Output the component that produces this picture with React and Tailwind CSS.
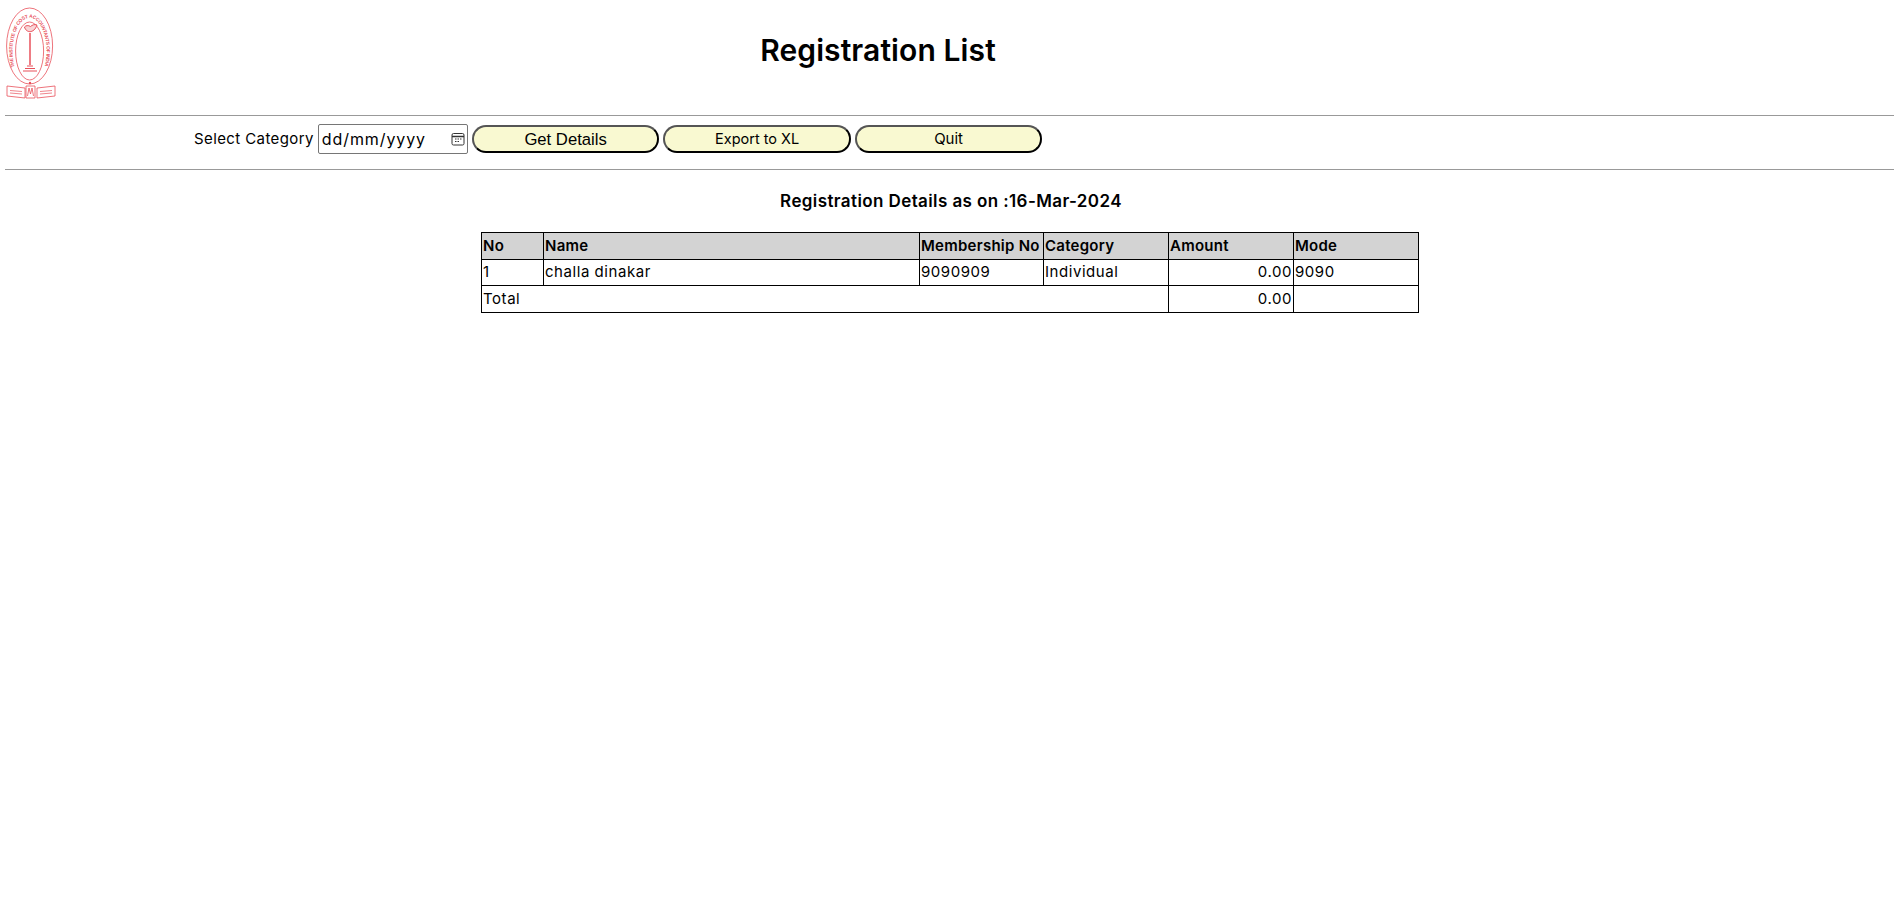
import React from 'react';

const Logo = () => (
  <svg width="52" height="96" viewBox="0 0 52 96" className="shrink-0" fill="none" stroke="#e8505b">
    <defs>
      <path id="logoArc" d="M9.600 62 A17 33.500 0 1 1 39.600 62" />
    </defs>
    <ellipse cx="24.600" cy="41" rx="23" ry="38" strokeWidth="0.8" />
    <ellipse cx="24.600" cy="46" rx="14" ry="29" strokeWidth="0.8" />
    <text fontSize="4.800" fill="#e8505b" stroke="none" fontFamily="'Liberation Sans', sans-serif" fontWeight="700">
      <textPath href="#logoArc" textLength="112" lengthAdjust="spacing">THE INSTITUTE OF COST ACCOUNTANTS OF INDIA</textPath>
    </text>
    <path d="M19.500 22 C21 28 29 29 32 20 C29 19 27.500 20 25.500 21.500 C23.500 20 20.500 20.500 19.500 22 Z" strokeWidth="1" fill="#f9d5d7" />
    <path d="M25 28 V60" strokeWidth="1.500" />
    <path d="M22 61 H28 M20 63.500 H30 M18 66 H32" strokeWidth="1.200" />
    <circle cx="25" cy="78" r="1.200" fill="#e8505b" stroke="none" />
    <path d="M2 81 L20 83 V93 L2 91 Z M50 81 L32 83 V93 L50 91 Z" strokeWidth="0.8" fill="#fff" />
    <path d="M21 81 H30 V93 H21 Z M22.500 91 L24 83 L25.500 89 L27 83 L28.500 91" strokeWidth="0.8" fill="#fff" />
    <path d="M5 85.500 L17 86.500 M5 88 L17 89 M35 86.500 L47 85.500 M35 89 L47 88" strokeWidth="0.7" />
  </svg>
);

const CalendarIcon = () => (
  <svg width="14" height="14" viewBox="0 0 14 14" fill="none" className="shrink-0">
    <rect x="1" y="1.500" width="12" height="11.500" rx="1.500" stroke="#333" strokeWidth="1" />
    <path d="M1 4.500 H13" stroke="#333" strokeWidth="1.500" />
    <path d="M4 7 H5.500 M6.500 7 H8 M9 7 H10.500 M4 9.500 H5.500 M6.500 9.500 H8" stroke="#333" strokeWidth="1" />
  </svg>
);

const PillButton = ({ children, className = 'text-[15px]' }) => (
  <button className={`w-[187.5px] h-[28px] rounded-[14px] bg-[#f9f9d1] border-2 border-t-[#555] border-l-[#555] border-r-black border-b-black text-black ${className}`}>
    {children}
  </button>
);

const th = 'border border-black bg-[#d3d3d3] text-left font-semibold tracking-[0.25px] h-[26.67px] px-px py-0';
const td = 'border border-black text-left font-normal tracking-[0.55px] h-[26.67px] px-px py-0';

export default function App() {
  return (
    <div className="min-h-[920px] bg-white text-black pl-[5px] pr-[10px] font-['Inter','Open_Sans',sans-serif]">
      <div className="flex items-start h-[115px] pt-[5px]">
        <Logo />
        <h1 className="flex-1 text-center text-[30px] font-semibold tracking-[0.1px] pt-[25px] pr-[195px] leading-[40px]">Registration List</h1>
      </div>
      <hr className="border-t border-[#999]" />
      <div className="flex items-center h-[53px] pl-[189px] pb-[7px]">
        <span className="text-[15px] tracking-[0.4px] mr-[4px]">Select Category</span>
        <div className="flex items-center justify-between w-[150px] h-[30px] border border-[#767676] rounded-[2px] pl-[3px] pr-[2px] mr-[4px] text-[16px] tracking-[0.9px]">
          <span>dd/mm/yyyy</span>
          <CalendarIcon />
        </div>
        <div className="flex gap-[4px]">
          <PillButton className="font-['Liberation_Sans',sans-serif] text-[16.67px] pb-[2px]">Get Details</PillButton>
          <PillButton className="text-[14.5px]">Export to XL</PillButton>
          <PillButton>Quit</PillButton>
        </div>
      </div>
      <hr className="border-t border-[#999]" />
      <h2 className="text-center text-[17px] font-semibold tracking-[0.4px] leading-[24px] mt-[19px] mb-[19px] ml-[3px]">Registration Details as on :16-Mar-2024</h2>
      <table className="ml-[476px] w-[938px] border-collapse table-fixed text-[15px] leading-[20px]">
        <colgroup>
          <col className="w-[62px]" />
          <col className="w-[376px]" />
          <col className="w-[124px]" />
          <col className="w-[125px]" />
          <col className="w-[125px]" />
          <col className="w-[125px]" />
        </colgroup>
        <thead>
          <tr>
            <th className={th}>No</th>
            <th className={th}>Name</th>
            <th className={`${th} whitespace-nowrap`}>Membership No</th>
            <th className={th}>Category</th>
            <th className={th}>Amount</th>
            <th className={th}>Mode</th>
          </tr>
        </thead>
        <tbody>
          <tr>
            <td className={td}>1</td>
            <td className={td}>challa dinakar</td>
            <td className={td}>9090909</td>
            <td className={td}>Individual</td>
            <td className={`${td} text-right`}>0.00</td>
            <td className={td}>9090</td>
          </tr>
          <tr>
            <td className={td} colSpan={4}>Total</td>
            <td className={`${td} text-right`}>0.00</td>
            <td className={td}></td>
          </tr>
        </tbody>
      </table>
    </div>
  );
}
